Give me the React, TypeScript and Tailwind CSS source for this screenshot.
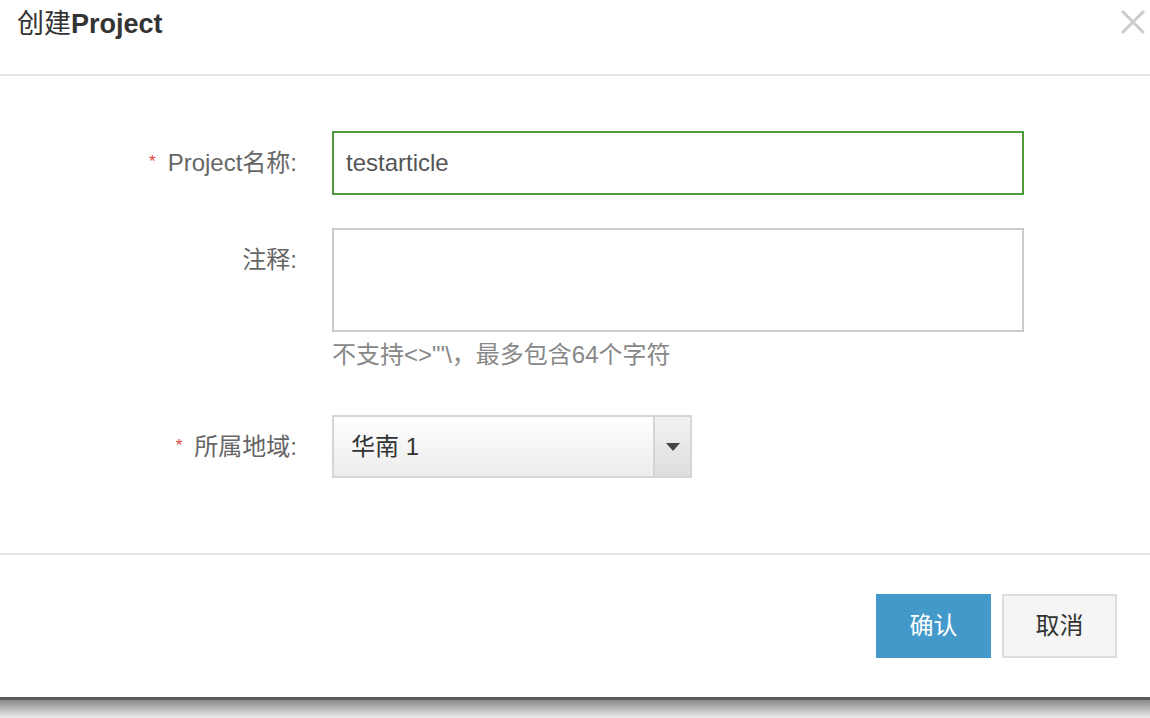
import { useState } from "react";

const font = { fontFamily: '"Liberation Sans", "Noto Sans CJK SC", sans-serif' };

function Label({ text, required }: { text: string; required?: boolean }) {
  return (
    <div className="flex h-[64px] items-center justify-end text-[24px] text-[#666]">
      {required && <span className="mr-[12px] -mt-[2px] text-[17px] text-[#e0453a]">*</span>}
      <span>{text}</span>
    </div>
  );
}

export default function App() {
  const [name, setName] = useState("testarticle");

  return (
    <div className="flex h-[718px] w-full flex-col bg-white" style={font}>
      <div className="flex h-[697px] flex-col">
        {/* header */}
        <header className="flex h-[76px] shrink-0 items-start justify-between border-b-2 border-[#e5e5e5] pl-[17px] pr-[4px]">
          <h1 className="mt-[8px] text-[27px] leading-[32px] text-[#333]">
            创建<span className="font-bold">Project</span>
          </h1>
          <button className="mt-[9px] text-[#cccccc]" aria-label="close">
            <svg width="26" height="26" viewBox="0 0 26 26" fill="none" stroke="currentColor" strokeWidth="3">
              <path d="M2 2 L24 24 M24 2 L2 24" />
            </svg>
          </button>
        </header>

        {/* form */}
        <div className="flex flex-1 flex-col pt-[55px]">
          <div className="grid grid-cols-[297px_692px] gap-x-[35px]">
            <Label text="Project名称:" required />
            <input
              className="h-[64px] border-2 border-[#4f9a3c] px-[12px] text-[24px] text-[#555] outline-none"
              value={name}
              onChange={(e) => setName(e.target.value)}
            />
          </div>

          <div className="mt-[33px] grid grid-cols-[297px_692px] gap-x-[35px]">
            <div className="flex h-[64px] items-center justify-end text-[24px] text-[#666]">注释:</div>
            <div className="flex flex-col">
              <textarea className="h-[104px] resize-none border-2 border-[#cccccc] outline-none" />
              <p className="mt-[9px] text-[24px] leading-[28px] text-[#888]">不支持&lt;&gt;"'\，最多包含64个字符</p>
            </div>
          </div>

          <div className="mt-[46px] grid grid-cols-[297px_692px] gap-x-[35px]">
            <Label text="所属地域:" required />
            <div className="flex h-[63px] w-[360px] border-2 border-[#d5d5d5] bg-gradient-to-b from-white to-[#ececec]">
              <div className="flex flex-1 items-center pl-[17px] text-[24px] text-[#333]">华南 1</div>
              <div className="flex w-[37px] items-center justify-center border-l-2 border-[#d5d5d5] bg-gradient-to-b from-[#f2f2f2] to-[#dedede]">
                <svg width="14" height="8" viewBox="0 0 14 8">
                  <path d="M0 0 L14 0 L7 8 Z" fill="#444" />
                </svg>
              </div>
            </div>
          </div>
        </div>

        {/* footer */}
        <footer className="flex h-[144px] shrink-0 items-start justify-end gap-[11px] border-t-2 border-[#e5e5e5] pr-[33px] pt-[39px]">
          <button className="h-[64px] w-[115px] bg-[#4399c9] text-[24px] text-white">确认</button>
          <button className="h-[64px] w-[115px] border-2 border-[#dddddd] bg-[#f5f5f5] text-[24px] text-[#333]">取消</button>
        </footer>
      </div>
      <div className="h-[21px] border-t-[3px] border-[#5a5a5a] bg-gradient-to-b from-[#8a8a8a] to-[#ececec]" />
    </div>
  );
}
